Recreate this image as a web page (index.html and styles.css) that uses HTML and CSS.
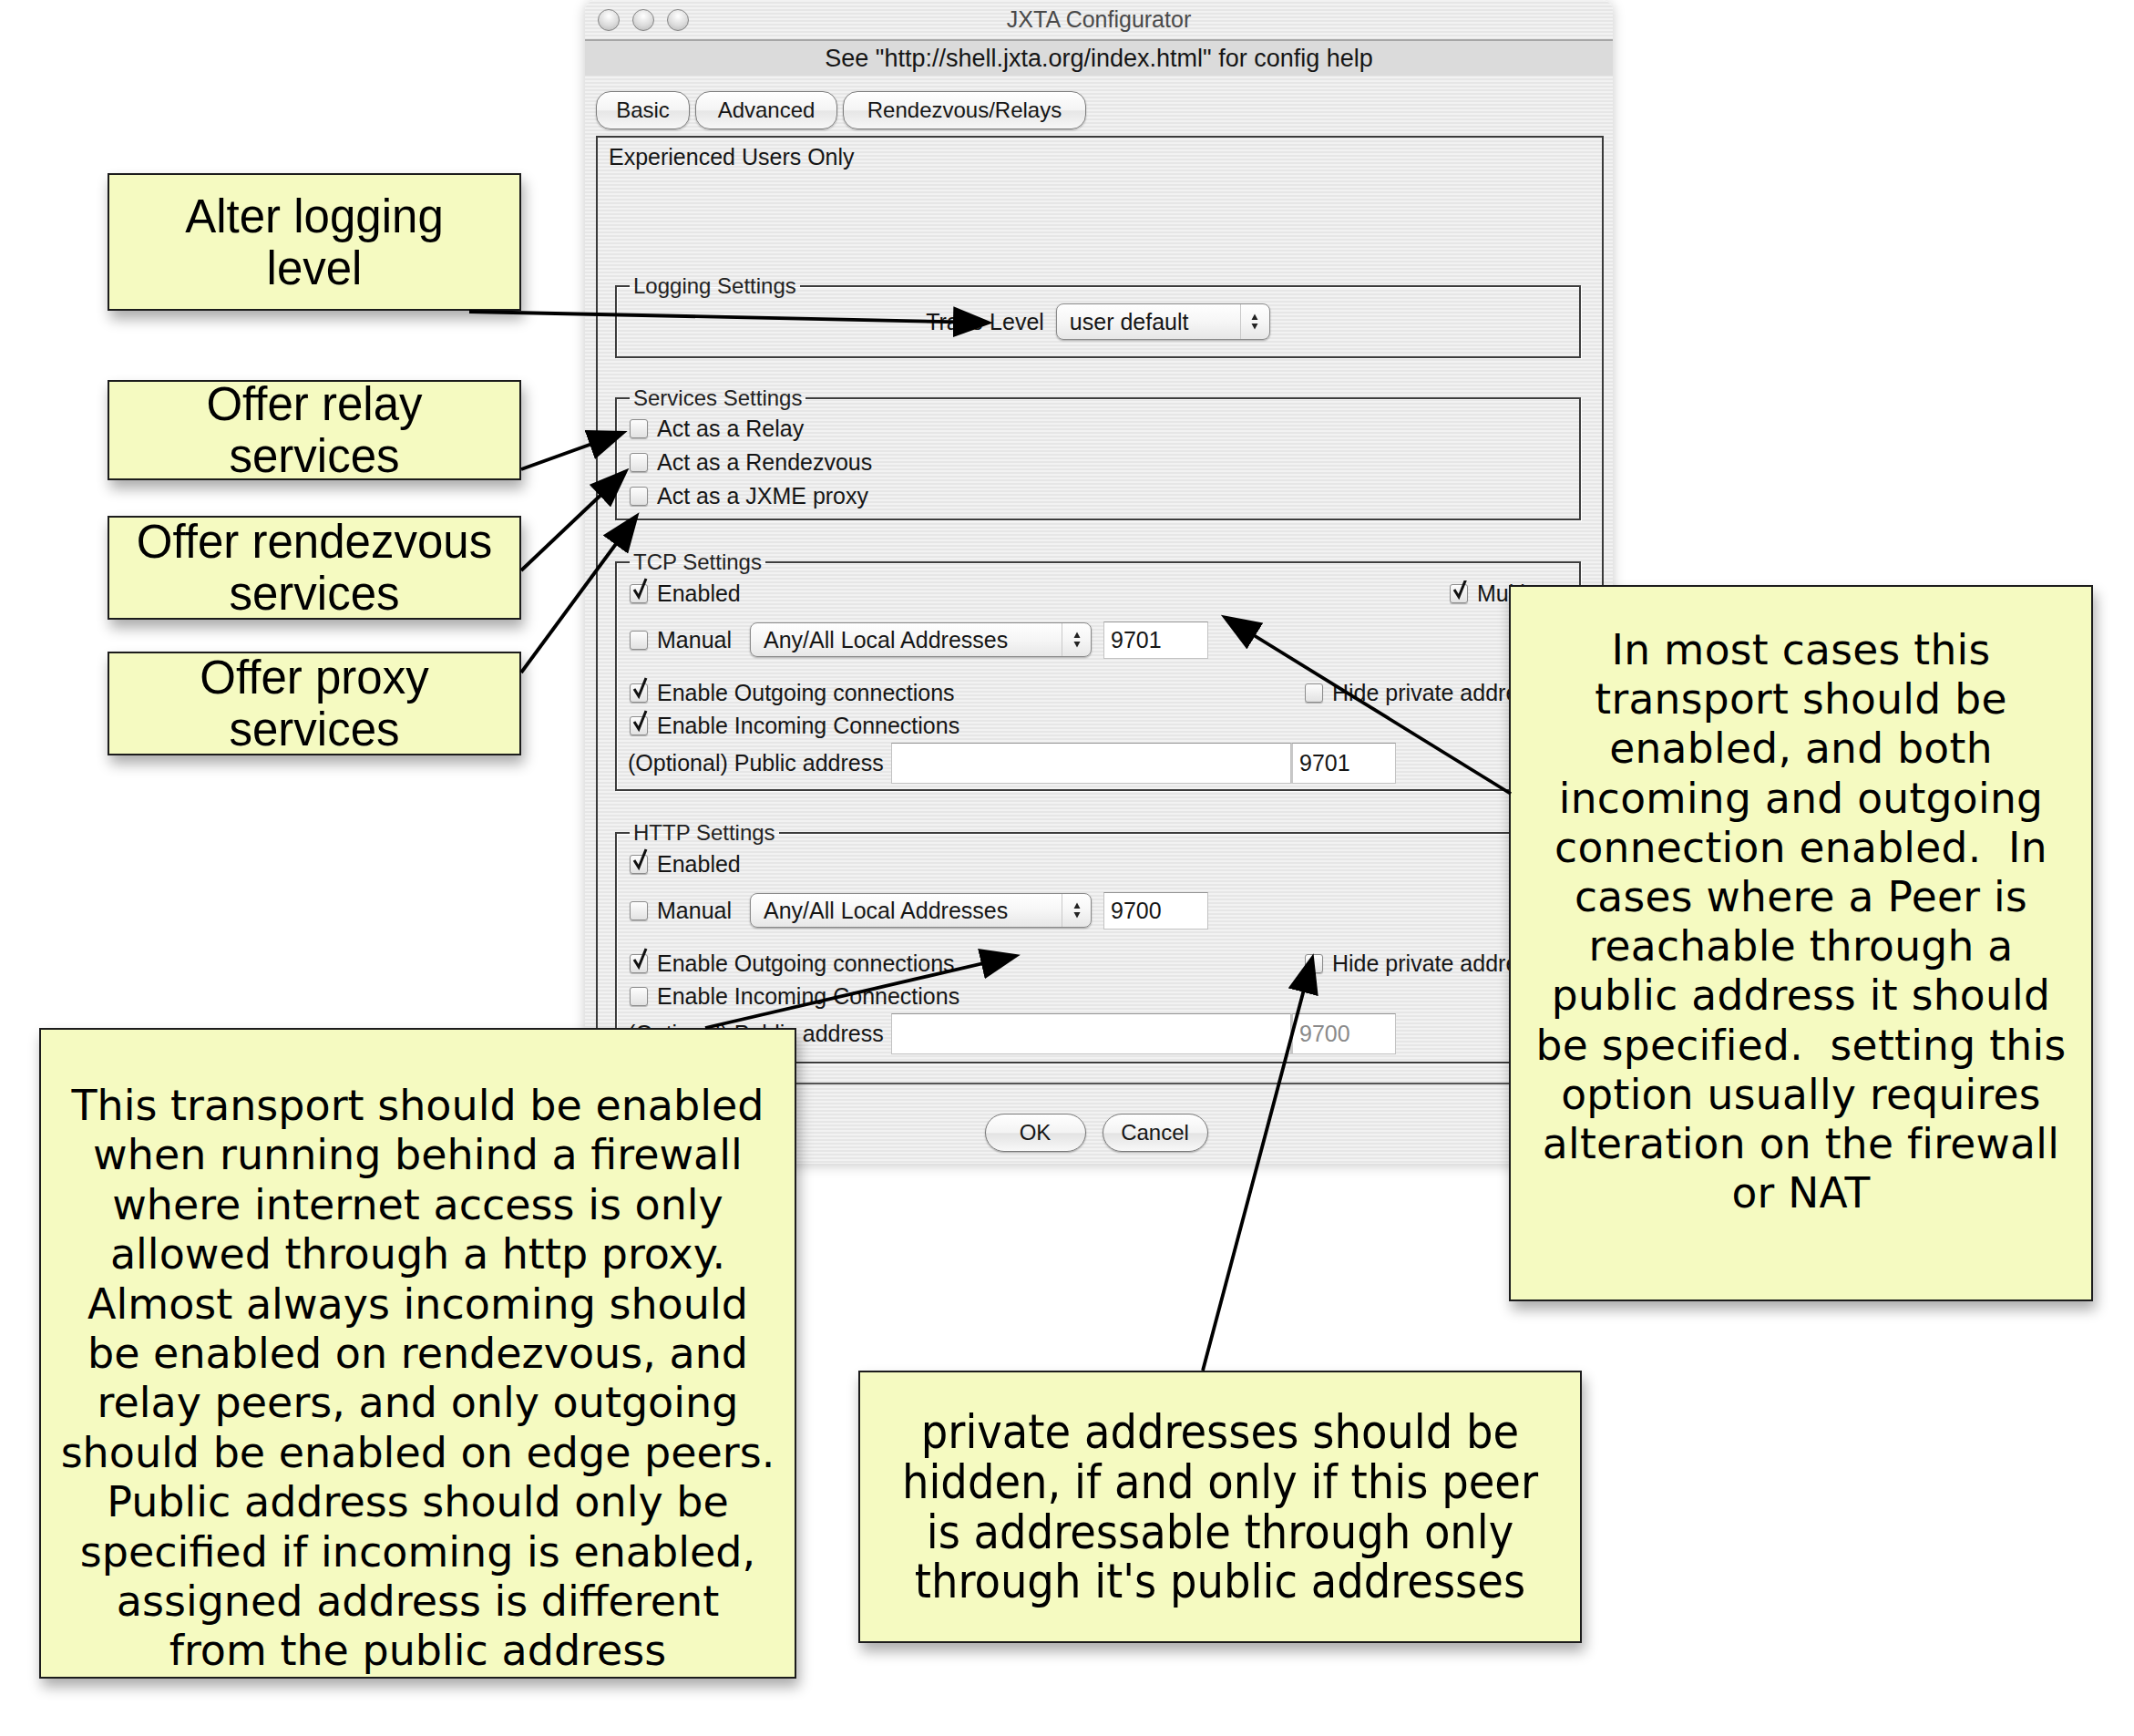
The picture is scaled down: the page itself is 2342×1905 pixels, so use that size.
FILE: index.html
```
<!DOCTYPE html>
<html>
<head>
<meta charset="utf-8">
<title>JXTA Configurator</title>
<link rel="stylesheet" href="styles.css">
</head>
<body>
<div class="canvas">
  <div class="window">
    <div class="titlebar">
      <div class="lights"><span class="light"></span><span class="light"></span><span class="light"></span></div>
      <div class="title">JXTA Configurator</div>
      <div></div>
    </div>
    <div class="helpbar">See "http://shell.jxta.org/index.html" for config help</div>
    <div class="tabs">
      <span class="tab tab-basic">Basic</span>
      <span class="tab tab-adv">Advanced</span>
      <span class="tab tab-rdv">Rendezvous/Relays</span>
    </div>
    <div class="panel">
      <div class="intro">Experienced Users Only</div>

      <fieldset class="group g-log">
        <legend>Logging Settings</legend>
        <div class="trace">
          <span>Trace Level</span>
          <span class="popup popup-trace"><span class="popup-text">user default</span><span class="popup-arrows"><svg width="10" height="22" viewBox="0 0 10 22"><path d="M1.5 9 L5 2.5 L8.5 9 Z M1.5 13 L5 19.5 L8.5 13 Z"/></svg></span></span>
        </div>
      </fieldset>

      <fieldset class="group g-svc">
        <legend>Services Settings</legend>
        <div class="row r-svc"><span class="cb"></span>Act as a Relay</div>
        <div class="row r-svc"><span class="cb"></span>Act as a Rendezvous</div>
        <div class="row r-svc"><span class="cb"></span>Act as a JXME proxy</div>
      </fieldset>

      <fieldset class="group g-tr">
        <legend>TCP Settings</legend>
        <div class="row r-en">
          <span class="item"><span class="cb on"><svg viewBox="0 0 20 26"><path d="M4 13 L9 21 L17 1"/></svg></span>Enabled</span>
          <span class="item right r-multi"><span class="cb on"><svg viewBox="0 0 20 26"><path d="M4 13 L9 21 L17 1"/></svg></span>Multicast</span>
        </div>
        <div class="row r-man">
          <span class="item manual"><span class="cb"></span>Manual</span>
          <span class="popup popup-addr"><span class="popup-text">Any/All Local Addresses</span><span class="popup-arrows"><svg width="10" height="22" viewBox="0 0 10 22"><path d="M1.5 9 L5 2.5 L8.5 9 Z M1.5 13 L5 19.5 L8.5 13 Z"/></svg></span></span>
          <span class="field port">9701</span>
        </div>
        <div class="row r-out">
          <span class="item"><span class="cb on"><svg viewBox="0 0 20 26"><path d="M4 13 L9 21 L17 1"/></svg></span>Enable Outgoing connections</span>
          <span class="item right r-hide"><span class="cb"></span>Hide private addresses</span>
        </div>
        <div class="row r-in">
          <span class="item"><span class="cb on"><svg viewBox="0 0 20 26"><path d="M4 13 L9 21 L17 1"/></svg></span>Enable Incoming Connections</span>
        </div>
        <div class="row r-pub">
          <span class="pub-label">(Optional) Public address</span>
          <span class="field pub-addr"></span>
          <span class="field pub-port">9701</span>
        </div>
      </fieldset>

      <fieldset class="group g-tr g-http">
        <legend>HTTP Settings</legend>
        <div class="row r-en">
          <span class="item"><span class="cb on"><svg viewBox="0 0 20 26"><path d="M4 13 L9 21 L17 1"/></svg></span>Enabled</span>
        </div>
        <div class="row r-man">
          <span class="item manual"><span class="cb"></span>Manual</span>
          <span class="popup popup-addr"><span class="popup-text">Any/All Local Addresses</span><span class="popup-arrows"><svg width="10" height="22" viewBox="0 0 10 22"><path d="M1.5 9 L5 2.5 L8.5 9 Z M1.5 13 L5 19.5 L8.5 13 Z"/></svg></span></span>
          <span class="field port">9700</span>
        </div>
        <div class="row r-out">
          <span class="item"><span class="cb on"><svg viewBox="0 0 20 26"><path d="M4 13 L9 21 L17 1"/></svg></span>Enable Outgoing connections</span>
          <span class="item right r-hide"><span class="cb"></span>Hide private addresses</span>
        </div>
        <div class="row r-in">
          <span class="item"><span class="cb"></span>Enable Incoming Connections</span>
        </div>
        <div class="row r-pub">
          <span class="pub-label">(Optional) Public address</span>
          <span class="field pub-addr"></span>
          <span class="field pub-port disabled">9700</span>
        </div>
      </fieldset>
    </div>
    <div class="buttons">
      <span class="btn btn-ok">OK</span>
      <span class="btn btn-cancel">Cancel</span>
    </div>
  </div>

  <div class="note note-sans n-log">Alter logging<br>level</div>
  <div class="note note-sans n-relay">Offer relay<br>services</div>
  <div class="note note-sans n-rdv">Offer rendezvous<br>services</div>
  <div class="note note-sans n-proxy">Offer proxy<br>services</div>

  <div class="note note-verdana n-tcp">In most cases this<br>transport should be<br>enabled, and both<br>incoming and outgoing<br>connection enabled.&nbsp; In<br>cases where a Peer is<br>reachable through a<br>public address it should<br>be specified.&nbsp; setting this<br>option usually requires<br>alteration on the firewall<br>or NAT</div>

  <div class="note note-tahoma n-http">This transport should be enabled<br>when running behind a firewall<br>where internet access is only<br>allowed through a http proxy.<br>Almost always incoming should<br>be enabled on rendezvous, and<br>relay peers, and only outgoing<br>should be enabled on edge peers.<br>Public address should only be<br>specified if incoming is enabled,<br>assigned address is different<br>from the public address</div>

  <div class="note note-cond n-hide">private addresses should be<br>hidden, if and only if this peer<br>is addressable through only<br>through it's public addresses</div>

  <svg class="arrows" width="2342" height="1905" viewBox="0 0 2342 1905">
    <defs>
      <marker id="ah" markerUnits="userSpaceOnUse" markerWidth="46" markerHeight="34" viewBox="0 0 46 34" refX="38" refY="17" orient="auto">
        <path d="M0 0 L44 17 L0 34 Z" fill="#000"/>
      </marker>
    </defs>
    <g stroke="#000" stroke-width="3.8" fill="none" marker-end="url(#ah)">
      <line x1="515" y1="342" x2="1084" y2="354"/>
      <line x1="572" y1="515" x2="683" y2="475"/>
      <line x1="572" y1="626" x2="686" y2="518"/>
      <line x1="572" y1="738" x2="698" y2="567"/>
      <line x1="1658" y1="871" x2="1345" y2="678"/>
      <line x1="774" y1="1128" x2="1114" y2="1049"/>
      <line x1="1320" y1="1504" x2="1440" y2="1052"/>
    </g>
  </svg>
</div>
</body>
</html>
```

FILE: styles.css
```
html, body {
  margin: 0;
  padding: 0;
  background: #ffffff;
}

.canvas {
  position: relative;
  width: 2342px;
  height: 1905px;
  overflow: hidden;
  background: #ffffff;
  font-family: "Liberation Sans", Arial, sans-serif;
}

/* ---------- window ---------- */
.window {
  position: absolute;
  left: 642px;
  top: 0;
  width: 1128px;
  height: 1277px;
  display: flex;
  flex-direction: column;
  background: repeating-linear-gradient(to bottom, #f2f2f2 0 2px, #e6e6e6 2px 4px);
  border-radius: 12px 12px 0 0;
  box-shadow: 0 2px 14px rgba(0, 0, 0, 0.22);
  color: #151515;
  font-size: 25px;
}

.titlebar {
  height: 43px;
  display: grid;
  grid-template-columns: 1fr auto 1fr;
  align-items: center;
  flex: none;
}

.lights {
  display: flex;
  gap: 14px;
  padding-left: 14px;
}

.light {
  width: 24px;
  height: 24px;
  border-radius: 50%;
  box-sizing: border-box;
  border: 1.5px solid #848484;
  background: radial-gradient(circle at 50% 30%, #ffffff 0%, #dcdcdc 55%, #b4b4b4 100%);
}

.title {
  color: #4a4a4a;
  font-size: 25px;
}

.helpbar {
  flex: none;
  height: 38px;
  line-height: 38px;
  background: #dbdbdb;
  border-top: 2px solid #a6a6a6;
  text-align: center;
  font-size: 27px;
}

.tabs {
  flex: none;
  display: flex;
  gap: 6px;
  margin: 17px 0 0 12px;
}

.tab {
  height: 42px;
  box-sizing: border-box;
  display: flex;
  align-items: center;
  justify-content: center;
  border: 1px solid #7e7e7e;
  border-radius: 16px;
  background: linear-gradient(#ffffff, #f4f4f4 50%, #e6e6e6 52%, #f7f7f7);
  box-shadow: 0 1px 2px rgba(0, 0, 0, 0.25);
  font-size: 24px;
}

.tab-basic { width: 103px; }
.tab-adv { width: 156px; }
.tab-rdv { width: 267px; }

.panel {
  flex: none;
  height: 1041px;
  box-sizing: border-box;
  margin: 7px 10px 0 12px;
  border: 2px solid #3a3a3a;
  border-bottom-color: #555;
  padding: 7px 0 0 0;
}

.intro {
  line-height: 28px;
  padding-left: 12px;
}

/* ---------- groups ---------- */
.group {
  margin: 0 23px 0 19px;
  padding: 0 14px;
  border: 2px solid #3c3c3c;
  box-shadow: 1px 1px 0 #ffffff, inset 1px 1px 0 #ffffff;
  min-width: 0;
  box-sizing: border-box;
}

.group legend {
  padding: 0 4px;
  margin-left: 0;
  font-size: 24px;
  line-height: 28px;
  color: #222;
}

.g-log {
  margin-top: 114px;
  height: 93px;
  padding-top: 5px;
}

.g-svc {
  margin-top: 30px;
  height: 148px;
  padding-top: 1px;
}

.g-tr {
  margin-top: 32px;
  height: 265px;
  padding-top: 3px;
}

.g-http {
  height: 267px;
}

.trace {
  display: flex;
  justify-content: center;
  align-items: center;
  gap: 13px;
  height: 40px;
}

.row {
  display: flex;
  align-items: center;
}

.item {
  display: flex;
  align-items: center;
  white-space: nowrap;
}

.right {
  margin-left: auto;
  overflow: hidden;
}

.r-multi { width: 128px; }
.r-hide { width: 287px; }

.r-svc { height: 37px; }
.r-en { height: 34px; }
.r-man { height: 38px; margin-top: 15px; }
.r-out { height: 36px; margin-top: 21px; }
.r-in { height: 36px; }
.r-pub { height: 45px; margin-top: 1px; }

.manual { width: 132px; }

/* checkbox */
.cb {
  position: relative;
  flex: none;
  width: 20px;
  height: 21px;
  box-sizing: border-box;
  margin-right: 10px;
  border: 1px solid #8c8c8c;
  border-radius: 3px;
  background: linear-gradient(#fdfdfd, #e2e2e2);
  box-shadow: 0 1px 1px rgba(0, 0, 0, 0.25);
}

.cb svg {
  position: absolute;
  left: 0;
  top: -8px;
  width: 20px;
  height: 26px;
}

.cb svg path {
  fill: none;
  stroke: #111;
  stroke-width: 3;
  stroke-linejoin: miter;
}

/* popup buttons */
.popup {
  display: flex;
  align-items: center;
  box-sizing: border-box;
  border: 1px solid #8a8a8a;
  border-radius: 8px;
  background: linear-gradient(#ffffff, #f6f6f6 50%, #e7e7e7);
  box-shadow: 0 1px 2px rgba(0, 0, 0, 0.3);
}

.popup-trace { width: 235px; height: 40px; }
.popup-addr { width: 375px; height: 38px; }

.popup-text {
  flex: 1;
  padding-left: 14px;
  white-space: nowrap;
}

.popup-arrows {
  flex: none;
  width: 32px;
  height: 100%;
  box-sizing: border-box;
  border-left: 1px solid #c9c9c9;
  display: flex;
  align-items: center;
  justify-content: center;
}

.popup-arrows path { fill: #222; }

/* text fields */
.field {
  display: flex;
  align-items: center;
  box-sizing: border-box;
  background: #ffffff;
  border: 1px solid #c2c2c2;
  border-top-color: #949494;
  padding-left: 7px;
}

.port {
  width: 115px;
  height: 41px;
  margin-left: 13px;
}

.pub-label {
  width: 289px;
  white-space: nowrap;
  margin-left: -2px;
}

.pub-addr {
  width: 439px;
  height: 45px;
}

.pub-port {
  width: 115px;
  height: 45px;
  border-left: 2px solid #c8c8c8;
}

.disabled { color: #8a8a8a; }

/* buttons */
.buttons {
  flex: none;
  display: flex;
  justify-content: center;
  gap: 18px;
  margin-top: 32px;
  padding-right: 6px;
}

.btn {
  height: 42px;
  box-sizing: border-box;
  display: flex;
  align-items: center;
  justify-content: center;
  border: 1px solid #7a7a7a;
  border-radius: 21px;
  background: linear-gradient(#ffffff, #f3f3f3 50%, #e3e3e3 52%, #f8f8f8);
  box-shadow: 0 1px 2px rgba(0, 0, 0, 0.3);
  font-size: 24px;
}

.btn-ok { width: 111px; }
.btn-cancel { width: 116px; }

/* ---------- notes ---------- */
.note {
  position: absolute;
  box-sizing: border-box;
  display: flex;
  justify-content: center;
  align-items: center;
  text-align: center;
  white-space: nowrap;
  color: #000;
  background: #f5fac1;
  border: 2px solid #1c1c1c;
  box-shadow: 3px 9px 14px rgba(0, 0, 0, 0.33);
}

.note-sans {
  font-family: "Liberation Sans", Arial, sans-serif;
  font-size: 51px;
  line-height: 57px;
}

.note-verdana {
  font-family: "DejaVu Sans", Verdana, sans-serif;
  font-size: 45.5px;
  letter-spacing: 0.3px;
  line-height: 54.2px;
}

.note-tahoma {
  font-family: "DejaVu Sans", Tahoma, sans-serif;
  font-size: 46px;
  line-height: 54.4px;
}

.note-cond {
  font-family: "DejaVu Sans Condensed", "DejaVu Sans", sans-serif;
  font-stretch: condensed;
  font-size: 51.7px;
  line-height: 54.8px;
}

.n-log { left: 118px; top: 190px; width: 454px; height: 151px; }
.n-relay { left: 118px; top: 417px; width: 454px; height: 110px; }
.n-rdv { left: 118px; top: 566px; width: 454px; height: 114px; }
.n-proxy { left: 118px; top: 715px; width: 454px; height: 114px; }

.n-tcp {
  left: 1656px; top: 642px; width: 641px; height: 786px;
  align-items: flex-start;
  padding-top: 43px;
}

.n-http {
  left: 43px; top: 1128px; width: 831px; height: 714px;
  align-items: flex-start;
  padding-top: 56px;
}

.n-hide { left: 942px; top: 1504px; width: 794px; height: 299px; }

.arrows {
  position: absolute;
  left: 0;
  top: 0;
  pointer-events: none;
}
```
